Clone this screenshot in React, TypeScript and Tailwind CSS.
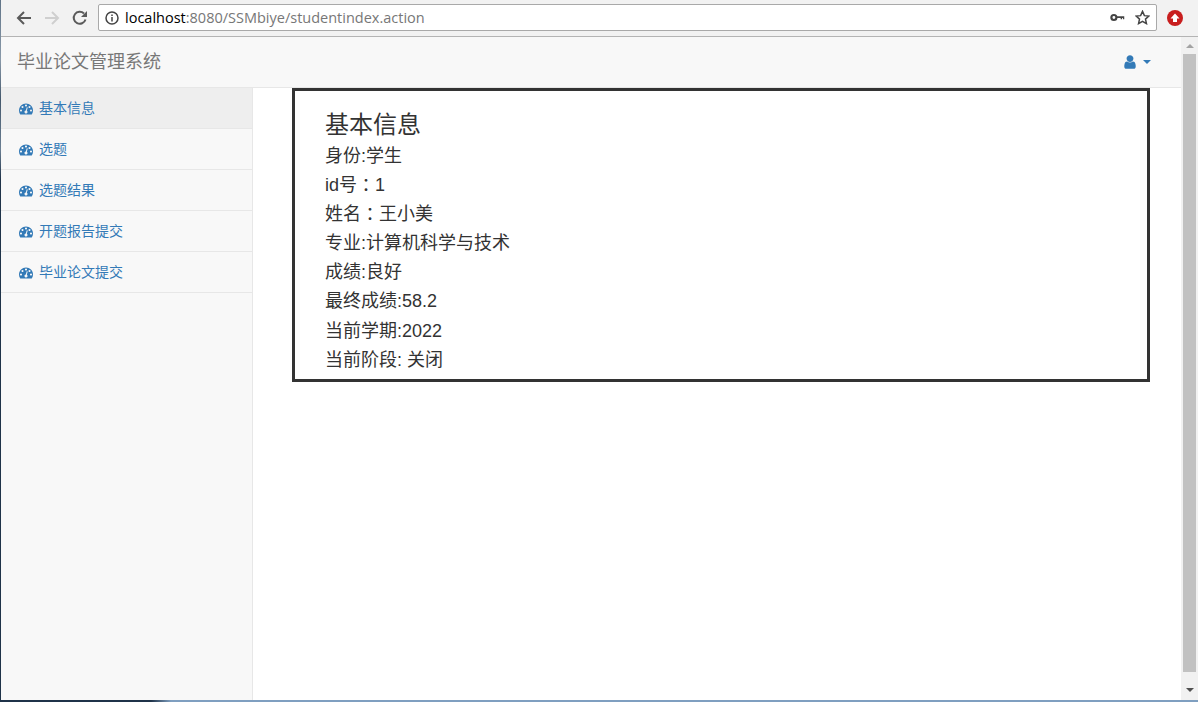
import React from "react";

const cjk = "font-['Liberation_Sans','Noto_Sans_CJK_SC',sans-serif]";
const menu = ["基本信息", "选题", "选题结果", "开题报告提交", "毕业论文提交"];
const colon = <span className="inline-block translate-y-[1px] font-['Noto_Sans_CJK_TC'] leading-[20px]">：</span>;
const rows: React.ReactNode[] = [
  "身份:学生",
  <>id号{colon}1</>,
  <>姓名{colon}王小美</>,
  "专业:计算机科学与技术",
  "成绩:良好",
  "最终成绩:58.2",
  "当前学期:2022",
  "当前阶段: 关闭",
];

function Gauge() {
  return (
    <svg className="h-[14px] w-[14px] text-[#337ab7]" viewBox="0 128 1792 1536" fill="currentColor" fillRule="evenodd">
      <path d="M384 1216q0-53-37.500-90.500t-90.500-37.500-90.500 37.500-37.500 90.500 37.500 90.500 90.500 37.500 90.500-37.500 37.500-90.500zm192-448q0-53-37.500-90.500t-90.500-37.500-90.500 37.500-37.500 90.500 37.500 90.500 90.500 37.500 90.500-37.500 37.500-90.500zm428 481l101-382q6-26-7.500-48.500t-38.500-29.500-48 6.500-30 39.500l-101 382q-60 5-107 43.500t-63 98.500q-20 77 20 146t117 89 146-20 89-117q16-60-6-117t-72-91zm660-33q0-53-37.500-90.500t-90.500-37.500-90.500 37.500-37.500 90.500 37.500 90.500 90.500 37.500 90.500-37.500 37.500-90.500zm-640-640q0-53-37.500-90.500t-90.500-37.500-90.500 37.500-37.500 90.500 37.500 90.500 90.500 37.500 90.500-37.500 37.500-90.500zm448 192q0-53-37.500-90.500t-90.500-37.500-90.500 37.500-37.500 90.500 37.500 90.500 90.500 37.500 90.500-37.500 37.500-90.500zm320 448q0 261-141 483-19 29-54 29h-1402q-35 0-54-29-141-221-141-483 0-182 71-348t191-286 286-191 348-71 348 71 286 191 191 286 71 348z" />
    </svg>
  );
}

function Toolbar() {
  return (
    <div className="flex h-[37px] shrink-0 items-center border-b border-[#b4b4b4] bg-[#f2f2f2] pb-[1px]">
      <svg className="ml-[15px] h-[16px] w-[16px]" viewBox="0 0 16 16" fill="none" stroke="#5a5a5a" strokeWidth="2">
        <path d="M15 8H2M8 2L2 8l6 6" />
      </svg>
      <svg className="ml-[12px] h-[16px] w-[16px]" viewBox="0 0 16 16" fill="none" stroke="#cfcfcf" strokeWidth="2">
        <path d="M1 8h13M8 2l6 6-6 6" />
      </svg>
      <svg className="ml-[12px] h-[16px] w-[16px]" viewBox="0 0 16 16" fill="none" stroke="#5a5a5a" strokeWidth="2">
        <path d="M13.500 9.500A6 6 0 1 1 12 3.500" />
        <path d="M15 1v6H9z" fill="#5a5a5a" stroke="none" />
      </svg>
      <div className="ml-[10px] flex h-[27px] w-[1059px] items-center rounded-[2px] border border-[#a9a9a9] bg-white">
        <svg className="ml-[6px] h-[14px] w-[14px]" viewBox="0 0 14 14" fill="none" stroke="#444" strokeWidth="1.500">
          <circle cx="7" cy="7" r="6" />
          <path d="M7 6v4.500M7 3.500v1.500" />
        </svg>
        <span className="ml-[6px] font-['Open_Sans',sans-serif] text-[14.500px] text-[#777]">
          <span className="text-black">localhost</span>:8080/SSMbiye/studentindex.action
        </span>
        <svg className="ml-auto h-[9px] w-[15px]" viewBox="0 0 16 10" fill="none">
          <circle cx="4" cy="5" r="2.800" stroke="#444" strokeWidth="2.400" />
          <path d="M7 3.500h8.500v3.500h-1.500v-1.500h-1V7h-1.500V5.500H7z" fill="#444" />
        </svg>
        <svg className="mr-[6px] ml-[10px] h-[15px] w-[15px]" viewBox="0 0 16 16" fill="none" stroke="#444" strokeWidth="1.600">
          <path d="M8 1.500l2 4.500 4.800.500-3.600 3.200 1 4.800L8 12.100l-4.200 2.400 1-4.800L1.200 6.500 6 6z" />
        </svg>
      </div>
      <div className="ml-[10px] flex h-[16px] w-[16px] items-center justify-center rounded-full bg-[#c81e1e]">
        <svg className="h-[10px] w-[10px]" viewBox="0 0 10 10" fill="white">
          <path d="M5 .5L9.500 5.500H7V9H3V5.500H.5z" />
        </svg>
      </div>
    </div>
  );
}

function Sidebar() {
  return (
    <div className="w-[252px] shrink-0 border-r border-[#e7e7e7] bg-[#f8f8f8]">
      {menu.map((m, i) => (
        <div key={m} className={`flex h-[41px] items-center gap-[6px] border-b border-[#e7e7e7] pl-[18px] ${i === 0 ? "bg-[#eeeeee]" : ""}`}>
          <Gauge />
          <span className="text-[14px] text-[#337ab7]">{m}</span>
        </div>
      ))}
    </div>
  );
}

function Scrollbar() {
  return (
    <div className="flex w-[17px] shrink-0 flex-col items-center bg-[#f1f1f1]">
      <div className="mt-[7px] h-0 w-0 border-x-[4px] border-b-[4px] border-x-transparent border-b-[#a3a3a3]" />
      <div className="mt-[6px] h-[618px] w-[13px] bg-[#c1c1c1]" />
      <div className="mt-[16px] h-0 w-0 border-x-[4px] border-t-[4px] border-x-transparent border-t-[#505050]" />
    </div>
  );
}

export default function App() {
  return (
    <div className={`flex h-[702px] w-[1198px] flex-col overflow-hidden border-l bg-white [border-image:linear-gradient(180deg,#5f7386,#8a9aaa_60px,#44586c_100px,#6b7f93_150px,#1f3349_180px)_1] ${cjk}`}>
      <Toolbar />
      <div className="flex min-h-0 flex-1">
        <div className="flex min-w-0 flex-1 flex-col">
          <div className="flex h-[51px] shrink-0 items-center justify-between border-b border-[#e7e7e7] bg-[#f8f8f8] pr-[30px] pl-[16px]">
            <span className="text-[18px] text-[#777]">毕业论文管理系统</span>
            <div className="flex items-center gap-[5px] text-[#337ab7]">
              <svg className="h-[16px] w-[16px]" viewBox="0 0 1792 1792" fill="currentColor">
                <path d="M1536 1399q0 109-62.500 187t-150.500 78h-854q-88 0-150.500-78t-62.500-187q0-85 8.500-160.500t31.500-152 58.500-131 94-89 134.500-34.500q131 128 313 128t313-128q76 0 134.500 34.500t94 89 58.500 131 31.500 152 8.500 160.500zm-256-887q0 159-112.500 271.500t-271.500 112.500-271.500-112.500-112.500-271.500 112.500-271.500 271.500-112.500 271.500 112.500 112.500 271.500z" />
              </svg>
              <div className="h-0 w-0 border-x-[4.500px] border-t-[4.500px] border-x-transparent border-t-[#337ab7]" />
            </div>
          </div>
          <div className="flex min-h-0 flex-1">
            <Sidebar />
            <div className="min-w-0 flex-1 pl-[39px]">
              <div className="h-[294px] w-[858px] border-[3px] border-[#333] px-[30px] pt-[17px] text-[#333]">
                <div className="text-[24px] leading-[34px]">基本信息</div>
                <div className="text-[18px]">
                  {rows.map((r, i) => (
                    <div key={i} className="h-[29.100px] overflow-hidden leading-[29.100px]">{r}</div>
                  ))}
                </div>
              </div>
            </div>
          </div>
        </div>
        <Scrollbar />
      </div>
      <div className="h-[2px] shrink-0 bg-[linear-gradient(90deg,#1f3349_150px,#7f9fc0_170px)]" />
    </div>
  );
}
